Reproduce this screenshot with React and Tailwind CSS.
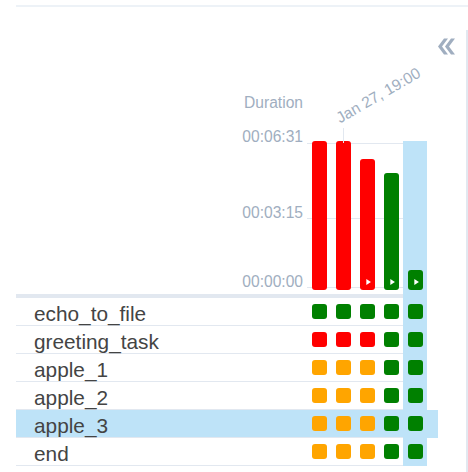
import React from "react";

const BG = {
  R: "bg-[#ff0000]",
  G: "bg-[#008000]",
  O: "bg-[#ffa500]",
};

const runs = [
  { h: 149, c: "R", play: false },
  { h: 149, c: "R", play: false },
  { h: 131, c: "R", play: true },
  { h: 117, c: "G", play: true },
  { h: 20, c: "G", play: true, selected: true },
];

const tasks = [
  { name: "echo_to_file", s: ["G", "G", "G", "G", "G"] },
  { name: "greeting_task", s: ["R", "R", "R", "G", "G"] },
  { name: "apple_1", s: ["O", "O", "O", "G", "G"] },
  { name: "apple_2", s: ["O", "O", "O", "G", "G"] },
  { name: "apple_3", s: ["O", "O", "O", "G", "G"], selected: true },
  { name: "end", s: ["O", "O", "O", "G", "G"] },
];

function Play() {
  return (
    <svg width="10" height="10" viewBox="0 0 24 24" fill="#ffffff">
      <path d="M8 5v14l11-7z" />
    </svg>
  );
}

function Bar({ run }) {
  return (
    <div
      className={`mb-[4px] ml-[5px] flex w-[15px] items-end justify-center rounded-[3px] pb-[3px] ${BG[run.c]}`}
      style={{ height: run.h }}
    >
      {run.play && <Play />}
    </div>
  );
}

export default function App() {
  return (
    <div className="relative h-[472px] w-[468px] overflow-hidden bg-white font-['Liberation_Sans',Arial,sans-serif]">
      <div className="ml-4 mt-[5px] h-[2px] bg-[#edf2f7]" />
      <div className="flex">
        <div className="w-[466px]">
          <div className="flex justify-end pr-[11px] pt-[31px]">
            <svg width="17" height="17" viewBox="0 0 17 17" fill="#a0aec0">
              <polygon points="0,8.5 6,0.5 10,0.5 4,8.5 10,16.5 6,16.5" />
              <polygon points="7,8.5 13,0.5 17,0.5 11,8.5 17,16.5 13,16.5" />
            </svg>
          </div>
          <div className="ml-4 mt-[5px] w-[422px]">
            {/* header */}
            <div className="flex">
              <div className="flex h-[238px] w-[291px] flex-col items-end border-b-4 border-[#e2e8f0] pr-1 pt-[34px] text-[15.6px] leading-[18px] text-[#a0aec0]">
                <span>Duration</span>
                <span className="mt-[16px]">00:06:31</span>
                <span className="mt-[58px]">00:03:15</span>
                <span className="mt-[51px]">00:00:00</span>
              </div>
              <div className="relative flex w-[120px]">
                <div className="absolute left-0 right-0 top-[83px] h-px bg-[#e2e8f0]" />
                <div className="absolute left-0 right-0 top-[158px] h-px bg-[#e2e8f0]" />
                <div className="absolute left-0 right-0 top-[227px] h-px bg-[#e2e8f0]" />
                {runs.map((run, i) =>
                  run.selected ? (
                    <div
                      key={i}
                      className="relative flex h-[238px] w-[24px] flex-col justify-end border-b-4 border-[#bee3f8]"
                    >
                      <div className="flex h-[153px] flex-col justify-end bg-[#bee3f8]">
                        <Bar run={run} />
                      </div>
                    </div>
                  ) : (
                    <div
                      key={i}
                      className="relative flex h-[238px] w-[24px] flex-col justify-end border-b-4 border-[#e2e8f0]"
                    >
                      <Bar run={run} />
                    </div>
                  )
                )}
                <div className="absolute left-[36px] top-[68px] h-[15px] w-px bg-[#e2e8f0]" />
                <span className="absolute left-[35px] top-[49px] origin-bottom-left -rotate-30 whitespace-nowrap text-[15.6px] leading-[18px] text-[#a0aec0]">
                  Jan 27, 19:00
                </span>
              </div>
            </div>
            {/* rows */}
            {tasks.map((t) => (
              <div
                key={t.name}
                className={`flex h-[28px] ${t.selected ? "bg-[#bee3f8]" : ""}`}
              >
                <div className="h-[28px] w-[291px] border-b border-[#e2e8f0] pl-[18px] pt-[4px] text-[20.8px] leading-[23px] text-[#444444]">
                  {t.name}
                </div>
                {t.s.map((c, i) => (
                  <div
                    key={i}
                    className={`h-[28px] w-[24px] border-b pt-[6px] pl-[5px] ${
                      i === 4
                        ? "border-[#bee3f8] bg-[#bee3f8]"
                        : "border-[#e2e8f0]"
                    }`}
                  >
                    <div className={`h-[15px] w-[15px] rounded-[3px] ${BG[c]}`} />
                  </div>
                ))}
              </div>
            ))}
          </div>
        </div>
        <div className="mt-[23px] h-[449px] w-[2px] bg-[#e2e8f0]" />
      </div>
    </div>
  );
}
